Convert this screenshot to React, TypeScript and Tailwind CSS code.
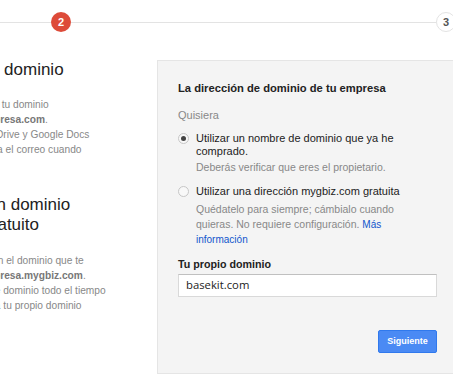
import React from 'react';

const Radio: React.FC<{ checked?: boolean }> = ({ checked = false }) => (
  <span className="mt-[1px] flex h-[11px] w-[11px] shrink-0 items-center justify-center rounded-full border border-[#c6c6c6] bg-[#f8f8f8]">
    {checked && <span className="h-[5px] w-[5px] rounded-full bg-[#444]"></span>}
  </span>
);

const App: React.FC = () => {
  return (
    <div className="h-screen w-full overflow-hidden bg-white font-['Liberation_Sans',Arial,sans-serif]">
      <div className="-ml-[115px] w-[573px]">
        {/* steps */}
        <div className="flex h-[44px] items-center">
          <div className="h-px w-[166px] bg-[#e3e3e3]"></div>
          <div className="flex h-5 w-5 items-center justify-center rounded-full bg-[#dd4b39] text-[11px] font-bold text-white">2</div>
          <div className="h-px flex-1 bg-[#e3e3e3]"></div>
          <div className="flex h-5 w-5 items-center justify-center rounded-full border border-[#e3e3e3] bg-white text-[11px] font-bold text-[#555]">3</div>
          <div className="w-[2px]"></div>
        </div>

        <div className="flex items-start">
          {/* left column, clipped by the window */}
          <div className="mt-4 w-[262px] whitespace-nowrap">
            <h2 className="text-[17px] leading-[20px] text-[#222]">Usen su propio dominio</h2>
            <div className="mt-[17px] text-[10.2px] leading-[15px] text-[#888]">
              <div>Si ya tienes uno, conecta tu dominio</div>
              <div>como <b className="text-[#777]">tunombre@tuempresa.com</b>.</div>
              <div>Integrado con su Gmail, Drive y Google Docs</div>
              <div>con tu empresa, configura el correo cuando</div>
            </div>

            <h2 className="mt-[38px] text-[17px] leading-[20px] text-[#222]">
              Prefiero usar un dominio
              <br />y totalmente gratuito
            </h2>
            <div className="mt-[18px] text-[10.2px] leading-[15px] text-[#888]">
              <div>Empieza ya a trabajar con el dominio que te</div>
              <div>como <b className="text-[#777]">tunombre@tuempresa.mygbiz.com</b>.</div>
              <div>Ya podrás conservar este dominio todo el tiempo</div>
              <div>hasta que tú prefieras ir a tu propio dominio</div>
            </div>
          </div>

          {/* domain panel */}
          <div className="ml-[10px] mt-4 w-[301px] border border-[#e5e5e5] bg-[#f4f4f4] px-5 pb-5 pt-5">
            <h3 className="text-[11.2px] font-bold leading-[14px] text-[#222]">La dirección de dominio de tu empresa</h3>
            <p className="mt-[13px] text-[11px] leading-[14px] text-[#888]">Quisiera</p>

            <div className="mt-[10px] flex gap-[7px]">
              <Radio checked />
              <div>
                <div className="text-[11px] leading-[13px] text-[#222]">
                  Utilizar un nombre de dominio que ya he
                  <br />
                  comprado.
                </div>
                <p className="mt-[2px] text-[10.5px] leading-[15px] text-[#888]">Deberás verificar que eres el propietario.</p>
              </div>
            </div>

            <div className="mt-[10px] flex gap-[7px]">
              <Radio />
              <div>
                <div className="text-[11px] leading-[13px] text-[#222]">Utilizar una dirección mygbiz.com gratuita</div>
                <p className="mt-[4px] text-[10.5px] leading-[15px] text-[#888]">
                  Quédatelo para siempre; cámbialo cuando
                  <br />
                  quieras. No requiere configuración. <a className="text-[10px] text-[#15c]">Más</a>
                  <br />
                  <a className="text-[10px] text-[#15c]">información</a>
                </p>
              </div>
            </div>

            <label className="mt-[10px] block text-[10.7px] font-bold leading-[14px] text-[#222]">Tu propio dominio</label>
            <div className="mt-[3px] flex h-[23px] items-center border border-[#d9d9d9] border-t-[#c0c0c0] bg-white px-[7px] font-['Open_Sans',sans-serif] text-[11.3px] text-[#222]">
              basekit.com
            </div>

            <div className="mt-[33px] flex justify-end">
              <button className="h-[23px] w-[59px] rounded-[2px] border border-[#3079ed] bg-[#4a8af4] text-[9px] font-bold text-white">
                Siguiente
              </button>
            </div>
          </div>
        </div>
      </div>
    </div>
  );
};

export default App;
